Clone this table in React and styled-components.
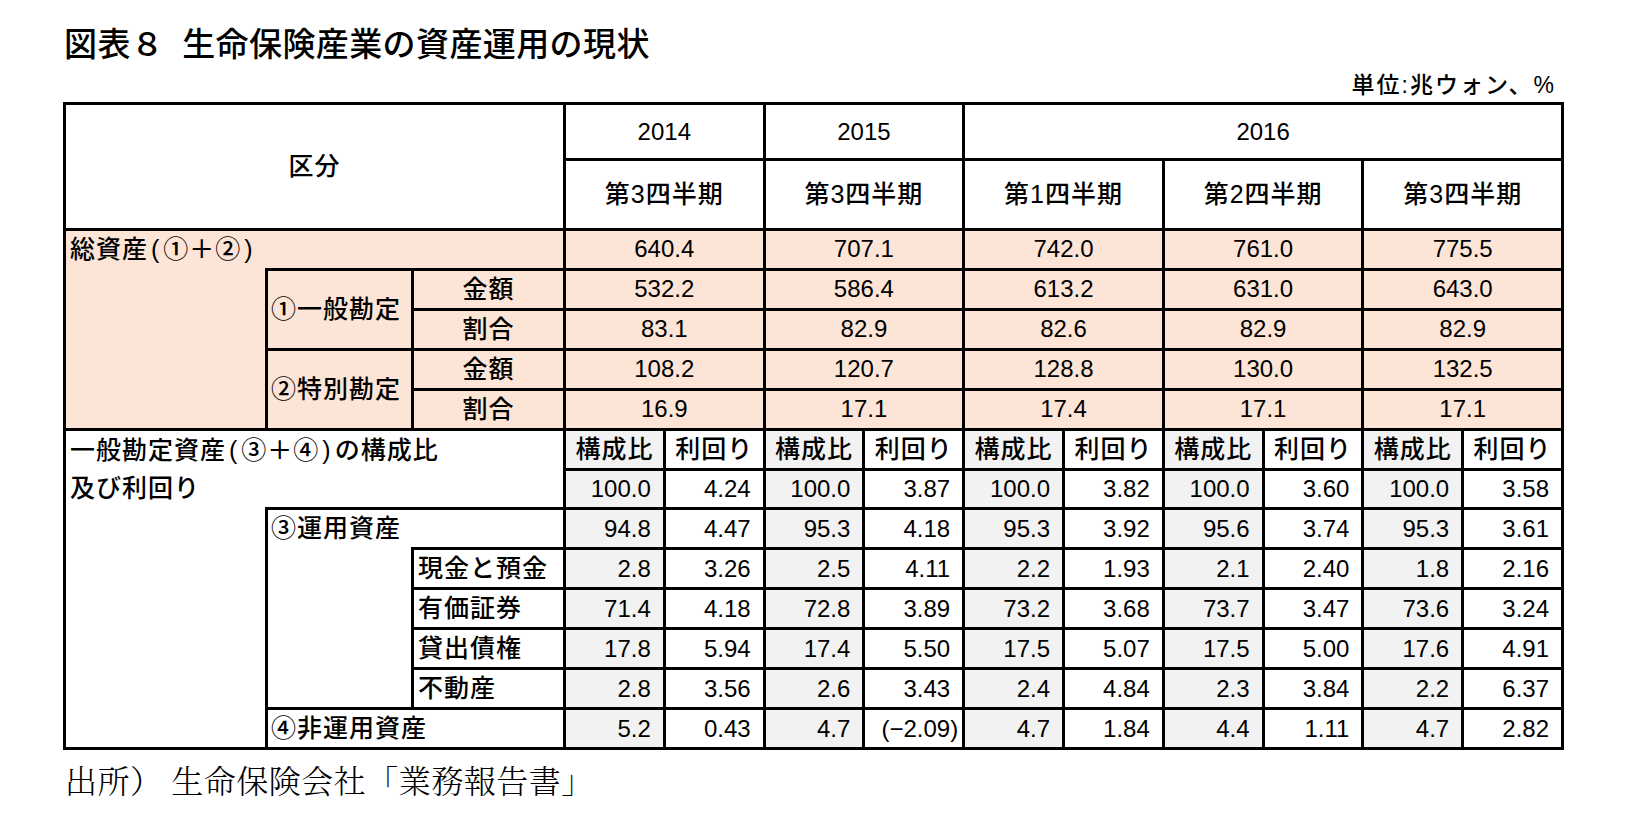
import React from "react";
import styled, { createGlobalStyle } from "styled-components";

const GlobalStyle = createGlobalStyle`
  html, body { margin: 0; padding: 0; background: #ffffff; }
  body {
    font-family: "Liberation Sans", "Noto Sans CJK JP", sans-serif;
    color: #000000;
  }
`;

const PINK = "#fce4d6";
const GRAY = "#f2f2f2";
const WHITE = "#ffffff";

const Page = styled.div`
  width: 1641px;
  height: 834px;
  box-sizing: border-box;
  padding: 22px 0 0 63px;
`;

const Title = styled.h1`
  margin: 0;
  padding-left: 1px;
  font-family: "Noto Sans CJK JP", sans-serif;
  font-weight: 500;
  font-size: 33px;
  line-height: 40px;
  letter-spacing: 0.4px;
`;

const TitleGap = styled.span`
  display: inline-block;
  width: 18px;
`;

const Unit = styled.div`
  width: 1501px;
  box-sizing: border-box;
  margin-top: 8px;
  padding-right: 8px;
  text-align: right;
  font-size: 23px;
  line-height: 30px;
  letter-spacing: 2px;
  font-weight: 500;
`;

const Grid = styled.div`
  margin-top: 2px;
  width: 1501px;
  height: 648px;
  box-sizing: border-box;
  display: grid;
  grid-template-columns: 199px 143px 149px repeat(10, 1fr);
  grid-template-rows: 53px 67px repeat(13, 1fr);
  gap: 3px;
  padding: 3px;
  background: #000000;
`;

const Cell = styled.div`
  grid-column: ${(p) => p.$col};
  grid-row: ${(p) => p.$row};
  background: ${(p) => p.$bg || WHITE};
  z-index: ${(p) => (p.$over ? 1 : 0)};
  display: flex;
  align-items: center;
  white-space: nowrap;
  min-width: 0;
  line-height: 1;
  font-weight: 500;
`;

const HeadCell = styled(Cell)`
  justify-content: center;
  font-size: 25px;
  letter-spacing: 1px;
`;

const YearCell = styled(Cell)`
  justify-content: center;
  font-size: 24px;
`;

const LabelCell = styled(Cell)`
  justify-content: flex-start;
  padding-left: ${(p) => p.$pad ?? 4}px;
  font-size: 25px;
  letter-spacing: 1px;
`;

const StackLabel = styled(Cell)`
  flex-direction: column;
  align-items: flex-start;
  justify-content: flex-start;
  padding-left: 4px;
  font-size: 25px;
  letter-spacing: 1px;
  line-height: 38.4px;
`;

const Paren = styled.span`
  padding: 0 3px;
`;

const MeasureCell = styled(Cell)`
  justify-content: center;
  font-size: 25px;
  letter-spacing: 1px;
`;

const AmountCell = styled(Cell)`
  justify-content: center;
  font-size: 24px;
`;

const DataCell = styled(Cell)`
  justify-content: flex-end;
  padding-right: ${(p) => (p.$neg ? 4 : 12)}px;
  font-size: 24px;
`;

const Footer = styled.div`
  margin-top: 10px;
  padding-left: 2px;
  font-family: "Noto Serif CJK JP", "Noto Sans CJK JP", serif;
  font-weight: 300;
  font-size: 32px;
  line-height: 38px;
  letter-spacing: 0.5px;
`;

const years = [
  { q: "第3四半期" },
  { q: "第3四半期" },
  { q: "第1四半期" },
  { q: "第2四半期" },
  { q: "第3四半期" },
];

const pinkRows = [
  ["640.4", "707.1", "742.0", "761.0", "775.5"],
  ["532.2", "586.4", "613.2", "631.0", "643.0"],
  ["83.1", "82.9", "82.6", "82.9", "82.9"],
  ["108.2", "120.7", "128.8", "130.0", "132.5"],
  ["16.9", "17.1", "17.4", "17.1", "17.1"],
];

const dataRows = [
  ["100.0", "4.24", "100.0", "3.87", "100.0", "3.82", "100.0", "3.60", "100.0", "3.58"],
  ["94.8", "4.47", "95.3", "4.18", "95.3", "3.92", "95.6", "3.74", "95.3", "3.61"],
  ["2.8", "3.26", "2.5", "4.11", "2.2", "1.93", "2.1", "2.40", "1.8", "2.16"],
  ["71.4", "4.18", "72.8", "3.89", "73.2", "3.68", "73.7", "3.47", "73.6", "3.24"],
  ["17.8", "5.94", "17.4", "5.50", "17.5", "5.07", "17.5", "5.00", "17.6", "4.91"],
  ["2.8", "3.56", "2.6", "3.43", "2.4", "4.84", "2.3", "3.84", "2.2", "6.37"],
  ["5.2", "0.43", "4.7", "(−2.09)", "4.7", "1.84", "4.4", "1.11", "4.7", "2.82"],
];

const yearCol = (y) => `${4 + 2 * y} / span 2`;
const subCol = (i) => `${4 + i}`;

export default function App() {
  return (
    <>
      <GlobalStyle />
      <Page>
        <Title>
          図表８<TitleGap />生命保険産業の資産運用の現状
        </Title>
        <Unit>単位:兆ウォン、%</Unit>
        <Grid>
          {/* header */}
          <HeadCell $col="1 / 4" $row="1 / 3">区分</HeadCell>
          <YearCell $col="4 / 6" $row="1">2014</YearCell>
          <YearCell $col="6 / 8" $row="1">2015</YearCell>
          <YearCell $col="8 / 14" $row="1">2016</YearCell>
          {years.map((y, i) => (
            <HeadCell key={"q" + i} $col={yearCol(i)} $row="2">
              {y.q}
            </HeadCell>
          ))}

          {/* pink block */}
          <Cell $col="1" $row="3 / 8" $bg={PINK} />
          <LabelCell $col="1 / 4" $row="3" $bg={PINK} $over>
            総資産<Paren>(</Paren>①＋②<Paren>)</Paren>
          </LabelCell>
          <LabelCell $col="2" $row="4 / 6" $bg={PINK} $pad={3}>
            ①一般勘定
          </LabelCell>
          <MeasureCell $col="3" $row="4" $bg={PINK}>金額</MeasureCell>
          <MeasureCell $col="3" $row="5" $bg={PINK}>割合</MeasureCell>
          <LabelCell $col="2" $row="6 / 8" $bg={PINK} $pad={3}>
            ②特別勘定
          </LabelCell>
          <MeasureCell $col="3" $row="6" $bg={PINK}>金額</MeasureCell>
          <MeasureCell $col="3" $row="7" $bg={PINK}>割合</MeasureCell>
          {pinkRows.map((row, r) =>
            row.map((v, y) => (
              <AmountCell key={`p${r}-${y}`} $col={yearCol(y)} $row={`${3 + r}`} $bg={PINK}>
                {v}
              </AmountCell>
            ))
          )}

          {/* lower block */}
          <Cell $col="1" $row="8 / 16" />
          <StackLabel $col="1 / 4" $row="8 / 10" $over>
            <span>
              一般勘定資産<Paren>(</Paren>③＋④<Paren>)</Paren>の構成比
            </span>
            <span>及び利回り</span>
          </StackLabel>
          {years.map((_, y) => (
            <React.Fragment key={"h" + y}>
              <MeasureCell $col={subCol(2 * y)} $row="8" $bg={GRAY}>構成比</MeasureCell>
              <MeasureCell $col={subCol(2 * y + 1)} $row="8">利回り</MeasureCell>
            </React.Fragment>
          ))}
          <Cell $col="2" $row="10 / 15" />
          <LabelCell $col="2 / 4" $row="10" $over $pad={3}>③運用資産</LabelCell>
          <LabelCell $col="3" $row="11" $pad={4}>現金と預金</LabelCell>
          <LabelCell $col="3" $row="12" $pad={4}>有価証券</LabelCell>
          <LabelCell $col="3" $row="13" $pad={4}>貸出債権</LabelCell>
          <LabelCell $col="3" $row="14" $pad={4}>不動産</LabelCell>
          <LabelCell $col="2 / 4" $row="15" $pad={3}>④非運用資産</LabelCell>
          {dataRows.map((row, r) =>
            row.map((v, i) => (
              <DataCell
                key={`d${r}-${i}`}
                $col={subCol(i)}
                $row={`${9 + r}`}
                $bg={i % 2 === 0 ? GRAY : WHITE}
                $neg={v.startsWith("(")}
              >
                {v}
              </DataCell>
            ))
          )}
        </Grid>
        <Footer>出所） 生命保険会社「業務報告書」</Footer>
      </Page>
    </>
  );
}
